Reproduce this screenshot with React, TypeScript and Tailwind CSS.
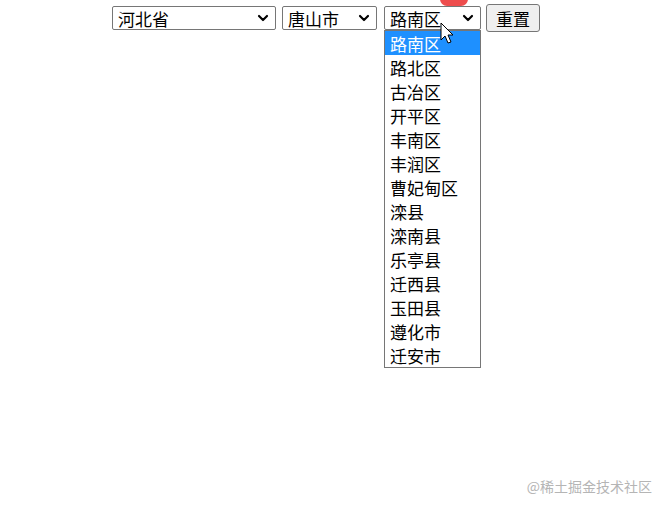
import { ChevronDown } from 'lucide-react';

const districts = [
  '路南区',
  '路北区',
  '古冶区',
  '开平区',
  '丰南区',
  '丰润区',
  '曹妃甸区',
  '滦县',
  '滦南县',
  '乐亭县',
  '迁西县',
  '玉田县',
  '遵化市',
  '迁安市',
];

function FakeSelect({ value, width }: { value: string; width: string }) {
  return (
    <div
      className={`${width} h-[24px] flex items-center justify-between border border-[#767676] rounded-[2px] bg-white pl-[5px] pr-[4px] text-[17px] leading-none text-black`}
    >
      <span>{value}</span>
      <ChevronDown size={16} strokeWidth={3.2} className="text-black" />
    </div>
  );
}

export default function App() {
  return (
    <div
      className="relative w-[667px] h-[509px] bg-white overflow-hidden"
      style={{ fontFamily: '"Noto Sans CJK SC", "Noto Sans", sans-serif' }}
    >
      {/* badge peeking from the top */}
      <div className="absolute left-[440px] top-[-10px] w-[28px] h-[16px] rounded-[7px] bg-[#ee4d4d]" />

      {/* Controls */}
      <div className="flex items-center pl-[112px] pt-[4px]">
        <FakeSelect value="河北省" width="w-[164px]" />
        <div className="w-[6px]" />
        <FakeSelect value="唐山市" width="w-[95px]" />
        <div className="w-[7px]" />
        <div className="relative">
          <FakeSelect value="路南区" width="w-[97px]" />
          {/* open list */}
          <div className="absolute left-0 top-[24px] w-[97px] border border-[#767676] bg-white z-10">
            {districts.map((d, i) => (
              <div
                key={d}
                className={`h-[24px] pl-[5px] flex items-center text-[17px] leading-none ${
                  i === 0 ? 'bg-[#1e90ff] text-white' : 'text-black'
                }`}
              >
                {d}
              </div>
            ))}
          </div>
        </div>
        <div className="w-[5px]" />
        <button className="w-[54px] h-[28px] border border-[#767676] rounded-[3px] bg-[#efefef] text-[17px] leading-none text-black">
          重置
        </button>
      </div>

      {/* mouse cursor */}
      <svg
        className="absolute left-[440px] top-[22px] z-20"
        width="14"
        height="24"
        viewBox="0 0 14 24"
      >
        <path
          d="M1 1 L1 18 L5 14 L8 21 L11 20 L8 13 L13 13 Z"
          fill="#fff"
          stroke="#000"
          strokeWidth="1"
          strokeLinejoin="round"
        />
      </svg>

      {/* watermark */}
      <div className="absolute right-[15px] bottom-[16px] text-[14px] text-[#b5b5b5] leading-none">
        @稀土掘金技术社区
      </div>
    </div>
  );
}
